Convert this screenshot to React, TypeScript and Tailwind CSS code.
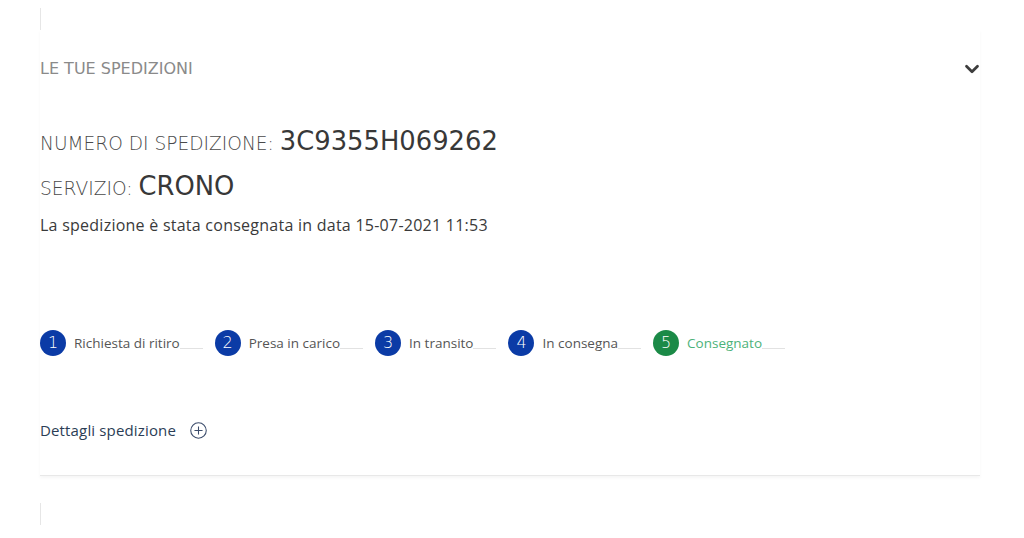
import { ChevronDown } from 'lucide-react';

const steps = [
    { n: 1, label: 'Richiesta di ritiro', done: false },
    { n: 2, label: 'Presa in carico', done: false },
    { n: 3, label: 'In transito', done: false },
    { n: 4, label: 'In consegna', done: false },
    { n: 5, label: 'Consegnato', done: true },
];

const heading = { fontFamily: '"DejaVu Sans", sans-serif' };

/**
 * Single step of the tracking progress
 */
function Step({ n, label, done }: { n: number; label: string; done: boolean }) {
    return (
        <div className="flex items-center">
            <div
                className={`w-[26px] h-[26px] rounded-full flex items-center justify-center text-white text-[16px] font-light ${
                    done ? 'bg-[#1b8a47]' : 'bg-[#0b3ba6]'
                }`}
                style={heading}
            >
                {n}
            </div>
            <span className={`ml-[8px] text-[13.5px] ${done ? 'text-[#4cb27a]' : 'text-[#555]'}`}>{label}</span>
            <span className="self-end mb-[7px] w-[23px] h-px bg-[#e2e2e2]" />
        </div>
    );
}

export default function App() {
    return (
        <div className="w-[1024px] h-[538px] bg-white overflow-hidden" style={{ fontFamily: '"Open Sans", sans-serif' }}>
            {/* previous card edge */}
            <div className="ml-10 mt-[8px] w-px h-[22px] bg-[#e6e6e6]" />

            <section className="mx-10 w-[940px] pt-[28px] border-b border-[#e8e8e8] shadow-[0_2px_3px_rgba(0,0,0,0.04)]">
                {/* header */}
                <div className="flex items-center justify-between h-[22px]">
                    <h2 className="text-[16px] text-[#8a8a8a]" style={heading}>
                        LE TUE SPEDIZIONI
                    </h2>
                    <ChevronDown className="w-[22px] h-[22px] text-[#3d3d3d] mr-[-3px]" strokeWidth={3} />
                </div>

                <div className="mt-[42px] flex items-baseline text-[#4a4a4a]" style={heading}>
                    <span className="text-[18.6px] font-light">NUMERO DI SPEDIZIONE:</span>
                    <span className="ml-[6px] text-[25.8px] text-[#383838]">3C9355H069262</span>
                </div>
                <div className="mt-[6px] flex items-baseline text-[#4a4a4a]" style={heading}>
                    <span className="text-[18.6px] font-light">SERVIZIO:</span>
                    <span className="ml-[6px] text-[25.8px] text-[#383838]">CRONO</span>
                </div>
                <p className="mt-[8px] text-[16px] tracking-[0.25px] text-[#3a3a3a]">
                    La spedizione è stata consegnata in data 15-07-2021 11:53
                </p>

                {/* progress */}
                <div className="mt-[93px] flex items-center gap-[12px]">
                    {steps.map((s) => (
                        <Step key={s.n} {...s} />
                    ))}
                </div>

                <div className="mt-[63px] mb-[33px] flex items-center text-[#2b3d55]">
                    <span className="text-[15px] tracking-[0.15px]">Dettagli spedizione</span>
                    <svg className="ml-[14px] w-[17px] h-[17px]" viewBox="0 0 16 16" fill="none" stroke="#3b4c6b" strokeWidth="1">
                        <circle cx="8" cy="8" r="7.3" />
                        <path d="M8 4.2v7.6M4.2 8h7.6" />
                    </svg>
                </div>
            </section>

            <div className="ml-10 mt-[27px] w-px h-[22px] bg-[#e6e6e6]" />
        </div>
    );
}
